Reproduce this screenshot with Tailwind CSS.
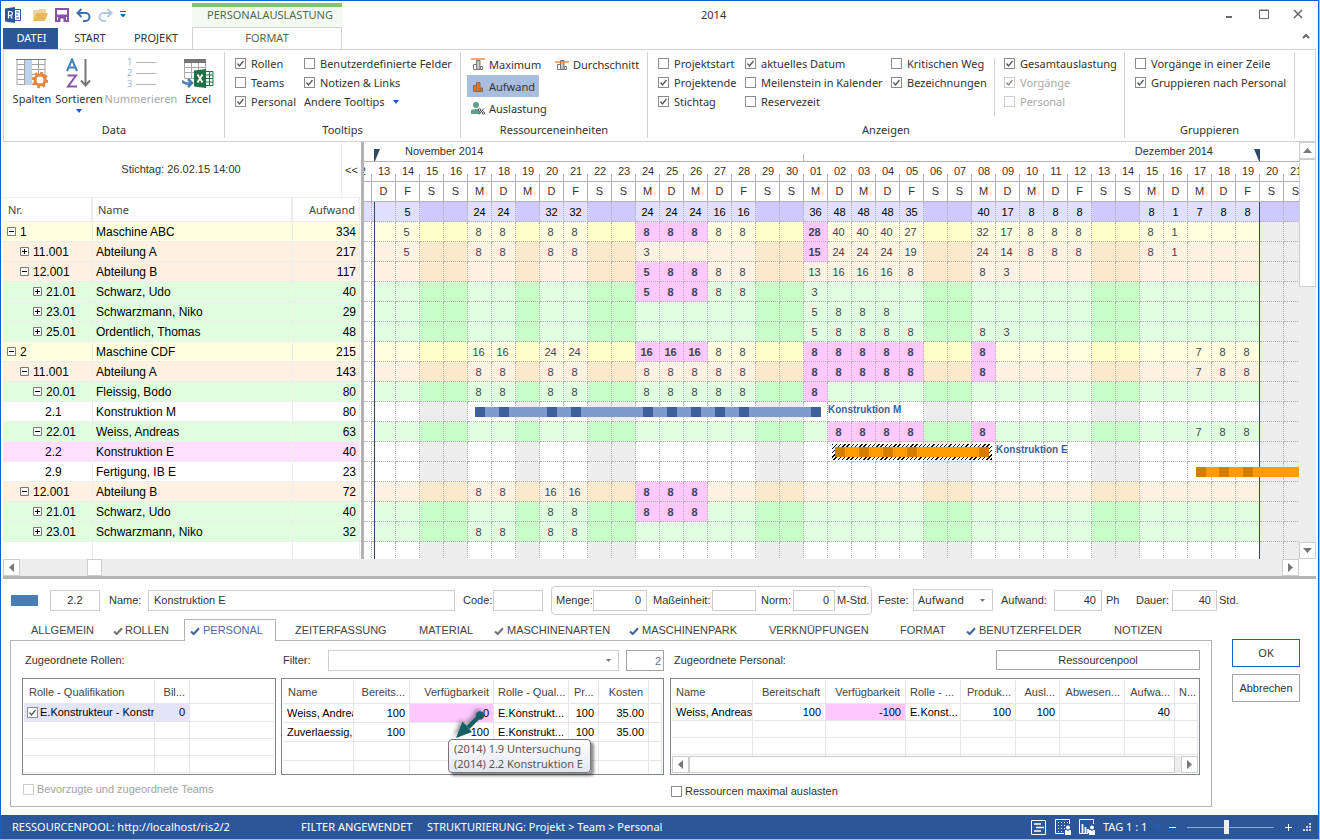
<!DOCTYPE html>
<html lang="de">
<head>
<meta charset="utf-8">
<title>2014 – Personalauslastung</title>
<script src="https://cdn.jsdelivr.net/npm/@tailwindcss/browser@4"></script>
</head>
<body class="h-screen min-w-[1320px] bg-[#9cc3ee] font-['Noto_Sans','Open_Sans',sans-serif] text-[11px] text-[#333]">
<svg class="hidden">
  <symbol id="tick" viewBox="0 0 11 11"><path d="M2.5 5.5 4.5 8 8.5 3" fill="none" stroke="currentColor" stroke-width="1.3"/></symbol>
  <symbol id="mark" viewBox="0 0 10 8"><path d="M1 4.5 3.7 7 9 1.2" fill="none" stroke="currentColor" stroke-width="2.2"/></symbol>
</svg>
<div class="mr-px flex h-[calc(100vh-1px)] flex-col border border-b-0 border-[#1062c6] bg-white">

  <!-- Title bar and ribbon tabs -->
  <header class="flex h-12 pl-0.5">
    <div class="flex w-[189px] flex-col">
      <div class="flex h-[27px] items-center gap-[7px] pl-0.5">
        <button aria-label="Rillsoft" class="w-5"><svg width="17" height="16" viewBox="0 0 17 16"><path d="M9 2.5h6.5v11H9" fill="#fff" stroke="#2b579a"/><path d="M11 5h3M11 8h2M11 11h3" stroke="#2b579a"/><path d="M0 1.5 10 0v16L0 14.500z" fill="#2b579a"/><path d="M3.500 11.500v-7h2a1.800 1.800 0 0 1 0 3.800h-2m2 0 1.700 3.200" fill="none" stroke="#fff" stroke-width="1.200"/></svg></button>
        <button aria-label="Öffnen"><svg width="16" height="14" viewBox="0 0 16 14"><path d="M1 12V3l1-1h4l1-1h6l1 1v4H5z" fill="#efd2a0"/><path d="M1 13 4.500 5H16l-3 8z" fill="#e8b763"/></svg></button>
        <button aria-label="Speichern"><svg width="14" height="14" viewBox="0 0 14 14"><path d="M1 1h12v12H1z" fill="#fff" stroke="#8753a8" stroke-width="2"/><path d="M1 6.500h12V9H1zM3 9h8v4H3z" fill="#8753a8"/><path d="M5.500 10.500h3V14h-3z" fill="#fff"/></svg></button>
        <button aria-label="Rückgängig"><svg width="15" height="14" viewBox="0 0 15 14"><path d="M2 5h7.500a4 4 0 0 1 0 8H7" fill="none" stroke="#3f6fae" stroke-width="2"/><path d="M5.500 1 1.500 5l4 4" fill="none" stroke="#3f6fae" stroke-width="2"/></svg></button>
        <button aria-label="Wiederholen"><svg width="15" height="14" viewBox="0 0 15 14"><path d="M13 5H5.500a4 4 0 0 0 0 8H8" fill="none" stroke="#b3c9e3" stroke-width="2"/><path d="M9.500 1l4 4-4 4" fill="none" stroke="#b3c9e3" stroke-width="2"/></svg></button>
        <button aria-label="Anpassen"><svg width="6" height="7" viewBox="0 0 6 7"><path d="M0 .5h6" stroke="#1062c6"/><path d="M0 3h6L3 6.500z" fill="#1062c6"/></svg></button>
      </div>
      <nav class="flex h-[21px] items-center">
        <button class="h-[21px] w-[55px] bg-[#2b579a] pl-0.5 text-white">DATEI</button>
        <button class="w-[64px]">START</button>
        <button class="w-[68px]">PROJEKT</button>
      </nav>
    </div>
    <div class="flex w-[150px] flex-col pt-0.5 text-[#51694a]">
      <div class="h-[25px] border-t-4 border-[#82c766] bg-[#f4faf3] pl-1.5 text-center leading-4">PERSONALAUSLASTUNG</div>
      <button class="z-10 h-[22px] flex-none border border-b-0 border-[#d2d2d2] bg-white text-center">FORMAT</button>
    </div>
    <h1 class="flex-1 pl-[359px] pt-1.5">2014</h1>
    <div class="flex w-[107px] flex-col justify-between pt-2 pb-2.5 text-[#6a6a6a]">
      <div class="flex gap-6 pl-3.5">
        <button aria-label="Minimieren"><svg width="10" height="10" viewBox="0 0 10 10"><path d="M1 8h6" stroke="currentColor" stroke-width="2"/></svg></button>
        <button aria-label="Maximieren"><svg width="10" height="10" viewBox="0 0 10 10"><path d="M.5 1h9v8.500h-9zM0 1.500h10" fill="none" stroke="currentColor"/></svg></button>
        <button aria-label="Schließen"><svg width="10" height="10" viewBox="0 0 10 10"><path d="m1 1 8 8M9 1 1 9" stroke="currentColor" stroke-width="1.600"/></svg></button>
      </div>
      <button aria-label="Menüband reduzieren" class="self-end pr-2"><svg width="8" height="6" viewBox="0 0 8 6"><path d="m1 5 3-3 3 3" fill="none" stroke="currentColor" stroke-width="2"/></svg></button>
    </div>
  </header>

  <!-- Ribbon -->
  <section class="mr-0.5 ml-0.5 flex h-[93px] flex-none border border-[#d2d2d2] leading-[15px]">
    <div class="mt-0.5 mb-[3px] flex w-[221px] flex-col border-r border-[#d2d2d2]">
      <div class="flex flex-1 items-start pt-1.5">
        <button class="ml-1 flex w-12 flex-col items-center gap-0.5">
          <svg width="32" height="31" viewBox="0 0 32 31"><path d="M1 1.500h28v25H1zM1 6.500h28M1 11.500h28M1 16.500h28M1 21.500h28M8.500 2v25M22.500 2v25" fill="none" stroke="#a3a3a3"/><path d="M9 2h7v25H9z" fill="#bcd3ec"/><path d="M0 1.500h30" stroke="#777"/><circle cx="24" cy="22" r="5" fill="#fff" stroke="#e8843c" stroke-width="3"/><circle cx="24" cy="22" r="7" fill="none" stroke="#e8843c" stroke-width="2.500" stroke-dasharray="2.750 2.750"/></svg>Spalten</button>
        <button class="flex w-[46px] flex-col items-center gap-0.5">
          <svg width="28" height="31" viewBox="0 0 28 31"><g fill="none" stroke-width="2"><path d="M2 13 7 1.500 12 13M3.500 9.500h7" stroke="#3f7fc0"/><path d="M2.500 17.500h8.500L3 28.500h9" stroke="#8a55b0"/><path d="M20.500 1v26M16 22.500l4.500 5 4.500-5" stroke="#777"/></g></svg>Sortieren
          <svg class="mt-px" width="6" height="4" viewBox="0 0 6 4"><path d="M0 0h6L3 4z" fill="#1062c6"/></svg></button>
        <button disabled class="flex w-[78px] flex-col items-center gap-0.5 text-[#a9a9a9]">
          <svg width="30" height="31" viewBox="0 0 30 31"><path d="M10 4.500h20M10 15.500h20M10 26.500h20" stroke="#b3b3b3"/><g fill="#8fb5dd" font-family="Noto Sans" font-size="9"><text x="1" y="7">1</text><text x="1" y="18">2</text><text x="1" y="29">3</text></g></svg>Nummerieren</button>
        <button class="flex w-9 flex-col items-center gap-0.5">
          <svg width="32" height="31" viewBox="0 0 32 31"><path d="M2.500 3.500h21v17h-21zM2 9.500h21M2 14.500h21M9.500 4v16M16.500 4v16" fill="none" stroke="#a9a9a9"/><path d="M2 1h22v4H2z" fill="#777"/><path d="M0 23c3 3 5 3 9 2M6 21l4 4-4 4" fill="none" stroke="#4a7db4" stroke-width="2.500"/><path d="M23 13.500h8v14h-8M24 17h7M24 20.500h7M24 24h7M27.500 14v14" fill="#fff" stroke="#1f7246"/><path d="M12 12.500 24 11v19l-12-1.500z" fill="#1f7246"/><path d="m15.500 16.500 5 8M20.500 16.500l-5 8" stroke="#fff" stroke-width="1.800"/></svg>Excel</button>
      </div>
      <h2 class="text-center leading-4">Data</h2>
    </div>

    <div class="mt-0.5 mb-[3px] flex w-[236px] flex-col border-r border-[#d2d2d2]">
      <div class="flex flex-1 gap-[9px] pt-0.5 pl-2.5 leading-[19px] whitespace-nowrap">
        <div class="w-[60px]">
          <label class="flex items-center gap-[5px]"><input type="checkbox" checked>Rollen</label>
          <label class="flex items-center gap-[5px]"><input type="checkbox">Teams</label>
          <label class="flex items-center gap-[5px]"><input type="checkbox" checked>Personal</label>
        </div>
        <div>
          <label class="flex items-center gap-[5px]"><input type="checkbox">Benutzerdefinierte Felder</label>
          <label class="flex items-center gap-[5px]"><input type="checkbox" checked>Notizen &amp; Links</label>
          <button class="flex items-center gap-2">Andere Tooltips <svg width="6" height="4" viewBox="0 0 6 4"><path d="M0 0h6L3 4z" fill="#1062c6"/></svg></button>
        </div>
      </div>
      <h2 class="text-center leading-4">Tooltips</h2>
    </div>

    <div class="mt-0.5 mb-[3px] flex w-[187px] flex-col border-r border-[#d2d2d2]">
      <div class="grid flex-1 auto-rows-[22px] grid-cols-[84px_95px] content-start justify-items-start pt-px pl-1.5 whitespace-nowrap">
        <button class="flex h-[22px] items-center gap-1 px-1"><svg width="14" height="12" viewBox="0 0 14 12"><path d="M0 1h14" stroke="#e8843c" stroke-width="1.400"/><path d="M2.500 11.500v-5h3v5zM9.500 11.500v-3h2v3z" fill="#fff" stroke="#777"/><path d="M5.500 11.500v-9h3.500v9z" fill="#c4c4c4" stroke="#777"/></svg>Maximum</button>
        <button class="flex h-[22px] items-center gap-1 px-1"><svg width="14" height="12" viewBox="0 0 14 12"><path d="M2.500 11.500v-5h3v5zM9.500 11.500v-3h2v3z" fill="#fff" stroke="#777"/><path d="M5.500 11.500v-9h3.500v9z" fill="#c4c4c4" stroke="#777"/><path d="M0 4h14" stroke="#e8843c" stroke-width="1.400"/></svg>Durchschnitt</button>
        <button class="col-span-2 flex h-[22px] items-center gap-1 bg-[#a9bddf] px-1"><svg width="14" height="12" viewBox="0 0 14 12"><path d="M2.500 11.500v-6h3v6zM5.500 11.500v-9h3.500v9zM9 11.500v-3.500h2.500v3.500z" fill="#e8761c" stroke="#8a6a50"/></svg>Aufwand</button>
        <button class="flex h-[22px] items-center gap-1 px-1"><svg width="14" height="14" viewBox="0 0 14 14"><circle cx="5" cy="4" r="3" fill="#62a08c"/><path d="M0 13V9.500Q1 8 5 8t4 2v3z" fill="#62a08c"/><circle cx="8.500" cy="9" r="1.300" fill="#fff" stroke="#444"/><circle cx="12.500" cy="12" r="1.200" fill="#fff" stroke="#444"/><path d="m8 13.500 5-6" stroke="#444"/></svg>Auslastung</button>
      </div>
      <h2 class="text-center leading-4">Ressourceneinheiten</h2>
    </div>

    <div class="mt-0.5 mb-[3px] flex w-[477px] flex-col border-r border-[#d2d2d2]">
      <div class="flex flex-1 pt-0.5 pl-2.5 leading-[19px] whitespace-nowrap">
        <div class="w-[87px]">
          <label class="flex items-center gap-[5px]"><input type="checkbox">Projektstart</label>
          <label class="flex items-center gap-[5px]"><input type="checkbox" checked>Projektende</label>
          <label class="flex items-center gap-[5px]"><input type="checkbox" checked>Stichtag</label>
        </div>
        <div class="w-[146px]">
          <label class="flex items-center gap-[5px]"><input type="checkbox" checked>aktuelles Datum</label>
          <label class="flex items-center gap-[5px]"><input type="checkbox">Meilenstein in Kalender</label>
          <label class="flex items-center gap-[5px]"><input type="checkbox">Reservezeit</label>
        </div>
        <div class="w-[103px]">
          <label class="flex items-center gap-[5px]"><input type="checkbox">Kritischen Weg</label>
          <label class="flex items-center gap-[5px]"><input type="checkbox" checked>Bezeichnungen</label>
        </div>
        <div class="mt-1 mb-1.5 w-[10px] border-l border-[#d2d2d2]"></div>
        <div>
          <label class="flex items-center gap-[5px]"><input type="checkbox" checked>Gesamtauslastung</label>
          <label class="flex items-center gap-[5px] text-[#a9a9a9]"><input type="checkbox" checked disabled>Vorgänge</label>
          <label class="flex items-center gap-[5px] text-[#a9a9a9]"><input type="checkbox" disabled>Personal</label>
        </div>
      </div>
      <h2 class="text-center leading-4">Anzeigen</h2>
    </div>

    <div class="mt-0.5 mb-[3px] flex w-[170px] flex-col border-r border-[#d2d2d2]">
      <div class="flex-1 pt-0.5 pl-2.5 leading-[19px] whitespace-nowrap">
        <label class="flex items-center gap-[5px]"><input type="checkbox">Vorgänge in einer Zeile</label>
        <label class="flex items-center gap-[5px]"><input type="checkbox" checked>Gruppieren nach Personal</label>
      </div>
      <h2 class="text-center leading-4">Gruppieren</h2>
    </div>
  </section>

  <!-- Resource tree and utilisation chart -->
  <main class="mr-0.5 ml-0.5 flex min-h-0 flex-1 font-['Liberation_Sans',sans-serif]">
    <div class="w-[358px] flex-none overflow-hidden">
      <div class="flex h-14 border-b border-[#ededed]">
        <div class="flex-1 pt-0.5 pl-[18px] text-center leading-[50px]">Stichtag: 26.02.15 14:00</div>
        <button class="w-5 border-l border-[#ededed] pt-0.5">&lt;&lt;</button>
      </div>
      <table class="w-[357px] table-fixed border-separate border-spacing-0 text-[12px] text-black">
        <colgroup><col class="w-[90px]"><col class="w-[200px]"><col></colgroup>
        <thead class="font-['Noto_Sans',sans-serif] text-[11px] text-[#444]">
          <tr class="h-6">
            <th class="border-r-2 border-b border-[#ededed] pt-0.5 pl-[5px] text-left font-normal">Nr.</th>
            <th class="border-r-2 border-b border-[#ededed] pt-0.5 pl-[5px] text-left font-normal">Name</th>
            <th class="border-r border-b border-[#ededed] pt-0.5 pr-1 text-right font-normal">Aufwand</th>
          </tr>
        </thead>
        <tbody id="tree"></tbody>
      </table>
    </div>
    <div class="w-[3px] flex-none bg-[#b3b3b3]"></div>
    <div class="relative min-w-0 flex-1 overflow-hidden text-[11px]">
      <div class="flex h-5 border-b border-[#b3b3b3] leading-[19px]">
        <div class="w-[440px] flex-none bg-[linear-gradient(#b3b3b3,#b3b3b3)] bg-[size:1px_7px] bg-[position:right_bottom] bg-no-repeat pl-[41px]">November 2014</div>
        <div class="flex-1 pr-[86px] text-right">Dezember 2014</div>
      </div>
      <table class="w-[944px] table-fixed border-separate border-spacing-0">
        <thead id="days"></thead>
        <tbody id="load"></tbody>
      </table>
      <!-- project start and end lines with their flags -->
      <div class="absolute top-[60px] bottom-0 left-2.5 w-px bg-[#2f4a66]"></div>
      <div class="absolute top-[60px] bottom-0 left-[895px] w-px bg-[#2f4a66]"></div>
      <svg class="absolute top-[7px] left-2.5" width="6" height="12" viewBox="0 0 6 12"><path d="M0 0h6L1 12H0z" fill="#2f4a66"/></svg>
      <svg class="absolute top-[7px] left-[890px]" width="6" height="12" viewBox="0 0 6 12"><path d="M6 0H0l5 12h1z" fill="#2f4a66"/></svg>
      <div id="bars"></div>
    </div>
    <div class="flex w-[17px] flex-none flex-col bg-[#ededed]">
      <button aria-label="Nach oben" class="grid h-[17px] place-items-center border border-[#cdcdcd] bg-white"><svg width="9" height="5" viewBox="0 0 9 5"><path d="M0 5h9L4.500 0z" fill="#777"/></svg></button>
      <div class="h-32 border border-[#cdcdcd] bg-white"></div>
      <button aria-label="Nach unten" class="mt-auto grid h-[17px] place-items-center border border-[#cdcdcd] bg-white"><svg width="9" height="5" viewBox="0 0 9 5"><path d="M0 0h9L4.500 5z" fill="#777"/></svg></button>
    </div>
  </main>
  <div class="mr-0.5 ml-0.5 flex h-5 flex-none border-b-3 border-[#b3b3b3]">
    <div class="flex flex-1 bg-[#ededed]">
      <button aria-label="Nach links" class="grid w-[17px] place-items-center border border-[#cdcdcd] bg-white"><svg width="5" height="9" viewBox="0 0 5 9"><path d="M5 0v9L0 4.500z" fill="#777"/></svg></button>
      <div class="ml-[67px] w-[15px] border border-[#cdcdcd] bg-white"></div>
      <button aria-label="Nach rechts" class="ml-auto grid w-[17px] place-items-center border border-[#cdcdcd] bg-white"><svg width="5" height="9" viewBox="0 0 5 9"><path d="M0 0v9l5-4.500z" fill="#777"/></svg></button>
    </div>
    <div class="w-[17px]"></div>
  </div>

  <!-- Activity details -->
  <section class="flex-none pl-[9px] font-['Liberation_Sans',sans-serif]">
    <div class="flex h-10 items-center pt-0.5">
      <div class="mr-3 ml-px h-[11px] w-[27px] bg-[#4a7db4]"></div>
      <input aria-label="Nummer" value="2.2" class="mr-[9px] h-[21px] w-[50px] border border-[#cdcdcd] text-center">
      <label for="f-name" class="w-[39px] pt-px">Name:</label>
      <input id="f-name" value="Konstruktion E" class="mr-2 h-[21px] w-[307px] border border-[#cdcdcd] pl-[5px]">
      <label for="f-code" class="w-[30px] pt-px">Code:</label>
      <input id="f-code" class="mr-2 h-[21px] w-[50px] border border-[#cdcdcd]">
      <div class="mr-1.5 flex h-[29px] w-[321px] items-center rounded border border-[#cdcdcd] pl-1">
        <label for="f-menge" class="w-[37px] pt-px">Menge:</label>
        <input id="f-menge" value="0" class="mr-1.5 h-[21px] w-[54px] border border-[#cdcdcd] pr-[5px] text-right">
        <label for="f-mass" class="w-[59px] pt-px">Maßeinheit:</label>
        <input id="f-mass" class="mr-[5px] h-[21px] w-11 border border-[#cdcdcd]">
        <label for="f-norm" class="w-8 pt-px">Norm:</label>
        <input id="f-norm" value="0" class="mr-0.5 h-[21px] w-[42px] border border-[#cdcdcd] pr-[5px] text-right">
        <span class="pt-px">M-Std.</span>
      </div>
      <label for="f-feste" class="w-[35px] pt-px">Feste:</label>
      <div class="relative mr-2">
        <select id="f-feste" class="h-[22px] w-20 appearance-none border border-[#cdcdcd] pt-px pl-1 font-['Noto_Sans',sans-serif]"><option>Aufwand</option></select>
        <svg class="pointer-events-none absolute top-[10px] right-2" width="5" height="3" viewBox="0 0 5 3"><path d="M0 0h5L2.500 3z" fill="#777"/></svg>
      </div>
      <label for="f-aufwand" class="w-[53px] pt-px">Aufwand:</label>
      <input id="f-aufwand" value="40" class="mr-1 h-[21px] w-12 border border-[#cdcdcd] pr-[5px] text-right">
      <span class="w-[30px] pt-px">Ph</span>
      <label for="f-dauer" class="w-9 pt-px">Dauer:</label>
      <input id="f-dauer" value="40" class="mr-0.5 h-[21px] w-[45px] border border-[#cdcdcd] pr-[5px] text-right">
      <span class="pt-px">Std.</span>
    </div>

    <div class="flex">
      <div class="w-[1202px]">
        <nav class="flex h-[21px] items-stretch pt-0.5 whitespace-nowrap text-[#444]">
          <button class="w-[103px] pl-[21px] text-left">ALLGEMEIN</button>
          <button class="flex w-[71px] items-center gap-0.5 text-left"><svg class="h-2 w-2.5 text-[#777]"><use href="#mark"/></svg>ROLLEN</button>
          <button class="z-10 -mt-0.5 flex h-[22px] w-[92px] items-center gap-[3px] border border-b-0 border-[#b3b3b3] bg-white pl-[5px] text-left text-[#4a6a9c]"><svg class="h-2 w-2.5 text-[#46689a]"><use href="#mark"/></svg>PERSONAL</button>
          <button class="w-[143px] pl-[19px] text-left">ZEITERFASSUNG</button>
          <button class="w-[75px] text-left">MATERIAL</button>
          <button class="flex w-[135px] items-center gap-[3px] text-left"><svg class="h-2 w-2.5 text-[#777]"><use href="#mark"/></svg>MASCHINENARTEN</button>
          <button class="flex w-[140px] items-center gap-[3px] text-left"><svg class="h-2 w-2.5 text-[#46689a]"><use href="#mark"/></svg>MASCHINENPARK</button>
          <button class="w-[131px] text-left">VERKNÜPFUNGEN</button>
          <button class="w-[66px] text-left">FORMAT</button>
          <button class="flex w-[148px] items-center gap-[3px] text-left"><svg class="h-2 w-2.5 text-[#46689a]"><use href="#mark"/></svg>BENUTZERFELDER</button>
          <button class="text-left">NOTIZEN</button>
        </nav>
        <div class="flex h-[167px] gap-[5px] border border-[#b3b3b3] pt-[9px] pl-[11px]">
          <div class="w-[254px]">
            <h3 class="h-7 pl-[3px] leading-5">Zugeordnete Rollen:</h3>
            <div class="h-[97px] overflow-hidden border border-[#7f848d] p-px">
              <table class="w-full table-fixed border-separate border-spacing-0 whitespace-nowrap text-black">
                <colgroup><col class="w-[131px]"><col class="w-[35px]"><col></colgroup>
                <thead class="text-[#444]"><tr class="h-6">
                  <th class="border-r border-b border-[#e6e6e6] pt-0.5 pl-[5px] text-left font-normal">Rolle - Qualifikation</th>
                  <th class="border-r border-b border-[#e6e6e6] pt-0.5 pr-1 text-right font-normal">Bil...</th>
                  <th class="border-b border-[#e6e6e6]"></th></tr></thead>
                <tbody>
                  <tr class="h-[17px]"><td class="overflow-hidden border-r border-b border-[#e6e6e6] bg-[#e4e5f8] p-0 pl-[3px]"><label class="flex h-4 items-center gap-0.5 overflow-hidden"><input type="checkbox" checked>E.Konstrukteur - Konstruktion</label></td><td class="border-r border-b border-[#e6e6e6] bg-[#e4e5f8] p-0 pr-1 text-right">0</td><td class="border-b border-[#e6e6e6] p-0"></td></tr>
                  <tr class="h-[17px]"><td class="border-r border-b border-[#e6e6e6]"></td><td class="border-r border-b border-[#e6e6e6]"></td><td class="border-b border-[#e6e6e6]"></td></tr>
                  <tr class="h-[17px]"><td class="border-r border-b border-[#e6e6e6]"></td><td class="border-r border-b border-[#e6e6e6]"></td><td class="border-b border-[#e6e6e6]"></td></tr>
                  <tr class="h-[17px]"><td class="border-r border-b border-[#e6e6e6]"></td><td class="border-r border-b border-[#e6e6e6]"></td><td class="border-b border-[#e6e6e6]"></td></tr>
                </tbody>
              </table>
            </div>
            <label class="mt-1.5 flex items-center gap-[3px] pl-px text-[#a3a3a3]"><input type="checkbox" disabled>Bevorzugte und zugeordnete Teams</label>
          </div>

          <div class="relative w-[383px]">
            <div class="flex h-7 items-start">
              <label for="f-filter" class="w-[47px] pl-0.5 leading-5">Filter:</label>
              <div class="relative mr-[7px]">
                <select id="f-filter" class="h-[21px] w-[291px] appearance-none border border-[#cdcdcd]"><option></option></select>
                <svg class="pointer-events-none absolute top-[9px] right-2" width="5" height="3" viewBox="0 0 5 3"><path d="M0 0h5L2.500 3z" fill="#777"/></svg>
              </div>
              <input aria-label="Anzahl" value="2" class="h-[21px] w-[38px] border border-[#a3a3a3] pr-0.5 text-right text-[#5f7593]">
            </div>
            <div class="h-[97px] overflow-hidden border border-[#7f848d] p-px">
              <table class="w-full table-fixed border-separate border-spacing-0 whitespace-nowrap text-black">
                <colgroup><col class="w-[71px]"><col class="w-14"><col class="w-[84px]"><col class="w-[75px]"><col class="w-[30px]"><col class="w-[50px]"><col></colgroup>
                <thead class="text-[#444]"><tr class="h-6">
                  <th class="border-r border-b border-[#e6e6e6] pt-0.5 pl-[5px] text-left font-normal">Name</th>
                  <th class="border-r border-b border-[#e6e6e6] pt-0.5 pr-1 text-right font-normal">Bereits...</th>
                  <th class="border-r border-b border-[#e6e6e6] pt-0.5 pr-1 text-right font-normal">Verfügbarkeit</th>
                  <th class="border-r border-b border-[#e6e6e6] pt-0.5 pl-1 text-left font-normal">Rolle - Qual...</th>
                  <th class="border-r border-b border-[#e6e6e6] pt-0.5 pl-[5px] text-left font-normal">Pr...</th>
                  <th class="border-r border-b border-[#e6e6e6] pt-0.5 pr-[5px] text-right font-normal">Kosten</th>
                  <th class="border-b border-[#e6e6e6]"></th></tr></thead>
                <tbody id="pool"></tbody>
              </table>
            </div>
            <!-- hint for the overbooked availability -->
            <div class="absolute top-[89px] left-[167px] w-[143px] rounded-sm border border-[#767676] bg-linear-to-b from-white to-[#e4e5f0] px-[5px] py-px font-['Noto_Sans',sans-serif] leading-[15px] whitespace-nowrap text-[#575757] shadow-[3px_3px_3px_rgba(0,0,0,0.45)]">(2014) 1.9 Untersuchung<br>(2014) 2.2 Konstruktion E</div>
            <svg class="absolute top-[58px] left-[172px] drop-shadow-[-2px_-2px_2px_rgba(0,0,0,0.4)]" width="34" height="34" viewBox="0 0 34 34"><circle cx="27" cy="7.500" r="4.200" fill="#175f66"/><path d="m27 7.500-12 12" stroke="#175f66" stroke-width="4.500"/><path d="M3 30 9.500 13.500 19 24z" fill="#175f66"/></svg>
          </div>

          <div class="ml-px w-[530px]">
            <div class="flex h-7 items-start justify-between pl-1">
              <h3 class="leading-5">Zugeordnete Personal:</h3>
              <button class="h-5 w-[204px] border border-[#a3a3a3]">Ressourcenpool</button>
            </div>
            <div class="h-[97px] overflow-hidden border border-[#7f848d] p-px">
              <div class="h-[76px] overflow-hidden">
              <table class="w-full table-fixed border-separate border-spacing-0 whitespace-nowrap text-black">
                <colgroup><col class="w-[81px]"><col class="w-[73px]"><col class="w-20"><col class="w-[55px]"><col class="w-[55px]"><col class="w-11"><col class="w-[65px]"><col class="w-[50px]"><col></colgroup>
                <thead class="text-[#444]"><tr class="h-6">
                  <th class="border-r border-b border-[#e6e6e6] pt-0.5 pl-1 text-left font-normal">Name</th>
                  <th class="border-r border-b border-[#e6e6e6] pt-0.5 pr-[5px] text-right font-normal">Bereitschaft</th>
                  <th class="border-r border-b border-[#e6e6e6] pt-0.5 pr-[5px] text-right font-normal">Verfügbarkeit</th>
                  <th class="border-r border-b border-[#e6e6e6] pt-0.5 pl-1 text-left font-normal">Rolle - ...</th>
                  <th class="border-r border-b border-[#e6e6e6] pt-0.5 pr-1 text-right font-normal">Produk...</th>
                  <th class="border-r border-b border-[#e6e6e6] pt-0.5 pr-1 text-right font-normal">Ausl...</th>
                  <th class="border-r border-b border-[#e6e6e6] pt-0.5 pr-1 text-right font-normal">Abwesen...</th>
                  <th class="border-r border-b border-[#e6e6e6] pt-0.5 pr-1 text-right font-normal">Aufwa...</th>
                  <th class="border-b border-[#e6e6e6] pt-0.5 pl-1 text-left font-normal">N...</th></tr></thead>
                <tbody id="assigned"></tbody>
              </table>
              </div>
              <div class="flex h-[17px] bg-[#ededed]">
                <button aria-label="Tabelle nach links" class="grid w-[17px] place-items-center border border-[#cdcdcd] bg-white"><svg width="5" height="9" viewBox="0 0 5 9"><path d="M5 0v9L0 4.500z" fill="#777"/></svg></button>
                <div class="w-[486px] border border-[#cdcdcd] bg-white"></div>
                <button aria-label="Tabelle nach rechts" class="ml-auto grid w-[17px] place-items-center border border-[#cdcdcd] bg-white"><svg width="5" height="9" viewBox="0 0 5 9"><path d="M0 0v9l5-4.500z" fill="#777"/></svg></button>
              </div>
            </div>
            <label class="mt-2 flex items-center gap-[3px] pl-px"><input type="checkbox">Ressourcen maximal auslasten</label>
          </div>
        </div>
      </div>
      <div class="flex flex-1 flex-col gap-[7px] pt-5 pr-[18px] pl-5">
        <button class="h-7 border border-[#1062c6] font-['Noto_Sans',sans-serif]">OK</button>
        <button class="h-7 border border-[#a3a3a3]">Abbrechen</button>
      </div>
    </div>
  </section>

  <!-- Status bar -->
  <footer class="mt-2 flex h-6 flex-none items-center bg-[#2b579a] pl-[11px] whitespace-nowrap text-white">
    <span class="w-[289px]">RESSOURCENPOOL: http://localhost/ris2/2</span>
    <span class="w-[126px]">FILTER ANGEWENDET</span>
    <span class="flex-1">STRUKTURIERUNG: Projekt &gt; Team &gt; Personal</span>
    <div class="flex items-center gap-2">
      <button aria-label="Gantt"><svg width="16" height="15" viewBox="0 0 16 15"><path d="M.5.5h14v14H.5z" fill="none" stroke="#fff"/><path d="M3 4h7M5 7.500h8M3 11h7" stroke="#fff" stroke-width="1.600"/></svg></button>
      <button aria-label="Personal"><svg width="16" height="16" viewBox="0 0 16 16"><path d="M14.500 5V.5H.5v14H9" fill="none" stroke="#fff"/><path d="M3 3.500h10M3 6.500h7M3 9.500h7M3 12.500h6" stroke="#fff" stroke-dasharray="1 2"/><circle cx="13" cy="8.500" r="2" fill="#fff"/><path d="M10 11h2l1 1.500 1-1.500h2v5h-6z" fill="#fff"/></svg></button>
      <button aria-label="Auslastung"><svg width="16" height="16" viewBox="0 0 16 16"><path d="M14.500 5V.5H.5v14H9" fill="none" stroke="#fff"/><path d="M3.500 5v9M6.500 8v6M9 10v4" stroke="#fff" stroke-width="1.800"/><circle cx="13" cy="8.500" r="2" fill="#fff"/><path d="M10 11h2l1 1.500 1-1.500h2v5h-6z" fill="#fff"/></svg></button>
      <span class="w-11">TAG 1 : 1</span>
      <svg width="6" height="4" viewBox="0 0 6 4"><path d="M0 0h6L3 4z" fill="#1062c6"/></svg>
    </div>
    <div class="flex w-[157px] items-center gap-[11px] pl-2">
      <button aria-label="Verkleinern"><svg width="7" height="7" viewBox="0 0 7 7"><path d="M0 3.500h7" stroke="#fff"/></svg></button>
      <input type="range" aria-label="Zoom" min="0" max="100" value="45" class="h-4 w-[87px] appearance-none bg-[linear-gradient(#8fa8cf,#8fa8cf)] bg-[size:100%_1px] bg-center bg-no-repeat [&::-webkit-slider-thumb]:h-3.5 [&::-webkit-slider-thumb]:w-[5px] [&::-webkit-slider-thumb]:appearance-none [&::-webkit-slider-thumb]:bg-[#f0f0f0]">
      <button aria-label="Vergrößern"><svg width="7" height="7" viewBox="0 0 7 7"><path d="M0 3.500h7M3.500 0v7" stroke="#fff"/></svg></button>
      <svg width="8" height="8" viewBox="0 0 8 8"><path d="M6 0h2v2H6zM6 3h2v2H6zM6 6h2v2H6zM3 3h2v2H3zM3 6h2v2H3zM0 6h2v2H0z" fill="#c9d5e8"/></svg>
    </div>
  </footer>
</div>

<script>
// Day numbers above 30 are in December (31 = 1 December). "!" marks an overload.
const OFF = new Set([15, 16, 19, 22, 23, 29, 30, 36, 37, 43, 44, 50, 51]);
const END = 50;
const PAINT = {
  sum:    ['bg-[#e1dfff]', 'bg-[#cecaff]', 'bg-[#e1dfff]'],
  yellow: ['bg-[#ffffdf]', 'bg-[#ffffc8]', 'bg-[#ffffdf]'],
  orange: ['bg-[#fdf1e1]', 'bg-[#fce8ca]', 'bg-[#fdf1e1]'],
  green:  ['bg-[#dfffdf]', 'bg-[#c8ffc8]', 'bg-[#dfffdf]'],
  white:  ['bg-white', 'bg-[#ededed]', 'bg-white'],
  pink:   ['bg-white', 'bg-[#ededed]', 'bg-[#ffe1ff]']
};
const INDENT = ['pl-1', 'pl-[17px]', 'pl-[30px]', 'pl-[42px]'];
const ROWS = [
  ['sum', 0, '', '', '', '', '14:5 17:24 18:24 20:32 21:32 24:24 25:24 26:24 27:16 28:16 31:36 32:48 33:48 34:48 35:35 38:40 39:17 40:8 41:8 42:8 45:8 46:1 47:7 48:8 49:8'],
  ['yellow', 0, '-', '1', 'Maschine ABC', 334, '14:5 17:8 18:8 20:8 21:8 24:8! 25:8! 26:8! 27:8 28:8 31:28! 32:40 33:40 34:40 35:27 38:32 39:17 40:8 41:8 42:8 45:8 46:1'],
  ['orange', 1, '+', '11.001', 'Abteilung A', 217, '14:5 17:8 18:8 20:8 21:8 24:3 31:15! 32:24 33:24 34:24 35:19 38:24 39:14 40:8 41:8 42:8 45:8 46:1'],
  ['orange', 1, '-', '12.001', 'Abteilung B', 117, '24:5! 25:8! 26:8! 27:8 28:8 31:13 32:16 33:16 34:16 35:8 38:8 39:3'],
  ['green', 2, '+', '21.01', 'Schwarz, Udo', 40, '24:5! 25:8! 26:8! 27:8 28:8 31:3'],
  ['green', 2, '+', '23.01', 'Schwarzmann, Niko', 29, '31:5 32:8 33:8 34:8'],
  ['green', 2, '+', '25.01', 'Ordentlich, Thomas', 48, '31:5 32:8 33:8 34:8 35:8 38:8 39:3'],
  ['yellow', 0, '-', '2', 'Maschine CDF', 215, '17:16 18:16 20:24 21:24 24:16! 25:16! 26:16! 27:8 28:8 31:8! 32:8! 33:8! 34:8! 35:8! 38:8! 47:7 48:8 49:8'],
  ['orange', 1, '-', '11.001', 'Abteilung A', 143, '17:8 18:8 20:8 21:8 24:8 25:8 26:8 27:8 28:8 31:8! 32:8! 33:8! 34:8! 35:8! 38:8! 47:7 48:8 49:8'],
  ['green', 2, '-', '20.01', 'Fleissig, Bodo', 80, '17:8 18:8 20:8 21:8 24:8 25:8 26:8 27:8 28:8 31:8!'],
  ['white', 3, '', '2.1', 'Konstruktion M', 80, ''],
  ['green', 2, '-', '22.01', 'Weiss, Andreas', 63, '32:8! 33:8! 34:8! 35:8! 38:8! 47:7 48:8 49:8'],
  ['pink', 3, '', '2.2', 'Konstruktion E', 40, ''],
  ['white', 3, '', '2.9', 'Fertigung, IB E', 23, ''],
  ['orange', 1, '-', '12.001', 'Abteilung B', 72, '17:8 18:8 20:16 21:16 24:8! 25:8! 26:8!'],
  ['green', 2, '+', '21.01', 'Schwarz, Udo', 40, '20:8 21:8 24:8! 25:8! 26:8!'],
  ['green', 2, '+', '23.01', 'Schwarzmann, Niko', 32, '17:8 18:8 20:8 21:8'],
  ['white', 0, '', '', '', '', '']
];
const days = Array.from({ length: 40 }, (_, i) => i + 12);
const label = d => String(d > 30 ? d - 30 : d).padStart(2, '0');

const tick = 'h-5 p-0 bg-[linear-gradient(#b3b3b3,#b3b3b3)] bg-[size:1px_7px] bg-[position:right_bottom] bg-no-repeat border-b border-[#b3b3b3] font-normal overflow-hidden';
const letters = ['', ...'DFSSMDMDFSSMDMDFSSMDMDFSSMDMDFSSMDMDFSS'];
document.getElementById('days').innerHTML =
  '<tr>' + days.map(d => `<th class="${d === 12 ? 'w-2' : 'w-6'} ${tick}">${d === 12 ? '<div class="flex justify-end overflow-hidden pr-1.5">12</div>' : label(d)}</th>`).join('') + '</tr>' +
  '<tr>' + letters.map(l => `<th class="h-5 border-r border-b border-[#b3b3b3] font-normal">${l}</th>`).join('') + '</tr>';

const box = s => s ? `<svg class="flex-none" width="9" height="9" viewBox="0 0 9 9"><path d="M.5.5h8v8h-8z" fill="#fff" stroke="#777"/><path d="${s === '+' ? 'M2 4.500h5M4.500 2v5' : 'M2 4.500h5'}" stroke="#000"/></svg>` : '';

document.getElementById('load').innerHTML = ROWS.map(([kind, , , , , , text]) => {
  const load = Object.fromEntries(text.split(' ').filter(Boolean).map(t => t.split(':')));
  return '<tr>' + days.map(d => {
    const v = load[d] || '', over = v.endsWith('!');
    let paint = PAINT[kind][OFF.has(d) ? 1 : 0];
    if (kind !== 'sum') {
      if (d === 12) paint = 'bg-white';
      if (d >= END) paint = 'bg-[#ededed]';
      if (d === 13) paint += ' bg-[linear-gradient(to_right,white_2px,transparent_2px)]';
      if (over) paint = 'bg-[#ffc8ff] font-bold';
    }
    const ink = kind === 'sum' ? 'p-0 pt-0.5 text-black' : 'p-0 pt-0.5 pr-0.5 text-[#444]';
    return `<td class="h-5 border-r border-b border-dotted border-[#b0b0b0] text-center ${ink} ${paint}">${v.replace('!', '')}</td>`;
  }).join('') + '</tr>';
}).join('');

document.getElementById('tree').innerHTML = ROWS.slice(1).map(([kind, depth, sign, nr, name, sum]) => {
  const bg = PAINT[kind][2];
  return `<tr class="${bg}"><td class="h-5 border-r border-b border-[#ededed] p-0"><div class="flex items-center gap-1 ${INDENT[depth]}">${box(sign)}${nr}</div></td>` +
    `<td class="border-r border-b border-[#ededed] p-0 pl-[3px]">${name}</td><td class="border-r border-b border-[#ededed] p-0 pr-[3px] text-right">${sum}</td></tr>`;
}).join('');

// Activity bars: x and width in pixels on the time axis, 24 px a day
const BARS = [
  { row: 10, x: 111, w: 346, cls: 'bg-[#7c9aca]', seg: 'bg-[#3f6199]', at: [0, 24, 72, 96, 168, 192, 216, 240, 264, 336], name: 'Konstruktion M', tx: 464 },
  { row: 12, x: 471, w: 154, cls: 'bg-[#ff9b05]', seg: 'bg-[#d27f00]', at: [0, 24, 48, 72, 144], name: 'Konstruktion E', tx: 632, picked: true },
  { row: 13, x: 832, w: 120, cls: 'bg-[#ff9b05]', seg: 'bg-[#d27f00]', at: [0, 23, 47] }
];
document.getElementById('bars').innerHTML = BARS.map(b => {
  const y = 60 + b.row * 20;
  return (b.picked ? `<div class="absolute h-4 bg-[repeating-linear-gradient(135deg,#000_0,#000_1px,#fff_1px,#fff_3px)]" style="left:${b.x - 3}px;top:${y + 2}px;width:${b.w + 6}px"></div>` : '') +
    `<div class="absolute h-2.5 ${b.cls}" style="left:${b.x}px;top:${y + 5}px;width:${b.w}px">` +
    b.at.map(s => `<i class="absolute top-0 h-2.5 w-2.5 ${b.seg}" style="left:${s}px"></i>`).join('') + '</div>' +
    (b.name ? `<div class="absolute text-[10px] leading-3 font-bold whitespace-nowrap text-[#3f6199]" style="left:${b.tx}px;top:${y + 2}px">${b.name}</div>` : '');
}).join('');

// Small tables of the details panel
const grid = (id, height, rows, align) => {
  document.getElementById(id).innerHTML = rows.map(r => `<tr class="${height}">` + r.map((v, i) =>
    `<td class="overflow-hidden border-r border-b border-[#e6e6e6] p-0 ${align[i]} ${v[0] === '*' ? 'bg-[#ffc8ff]' : ''}">${v.replace('*', '')}</td>`).join('') + '</tr>').join('');
};
const L = 'pl-1 text-left', R = 'pr-1 text-right';
grid('pool', 'h-[19px]', [
  ['Weiss, Andreas', '100', '*0', 'E.Konstrukt...', '100', '35.00', ''],
  ['Zuverlaessig,', '100', '100', 'E.Konstrukt...', '100', '35.00', ''],
  ['', '', '', '', '', '', ''], ['', '', '', '', '', '', '']
], [L, R, R, L, R, R, R]);
grid('assigned', 'h-[17px] leading-4', [
  ['Weiss, Andreas', '100', '*-100', 'E.Konst...', '100', '100', '', '40', ''],
  ['', '', '', '', '', '', '', '', ''], ['', '', '', '', '', '', '', '', ''], ['', '', '', '', '', '', '', '', '']
], [L, R, R, L, R, R, R, R, R]);

// Every tick box gets the flat look with a drawn tick
document.querySelectorAll('input[type=checkbox]').forEach(el => {
  const wrap = document.createElement('span');
  wrap.className = 'grid flex-none';
  el.replaceWith(wrap);
  el.className = 'peer col-start-1 row-start-1 size-[11px] appearance-none border border-[#8c8c8c] bg-white disabled:border-[#cdcdcd]';
  wrap.append(el);
  wrap.insertAdjacentHTML('beforeend', '<svg class="pointer-events-none col-start-1 row-start-1 hidden size-[11px] text-[#555] peer-checked:block peer-disabled:text-[#888]"><use href="#tick"/></svg>');
});
</script>
</body>
</html>
